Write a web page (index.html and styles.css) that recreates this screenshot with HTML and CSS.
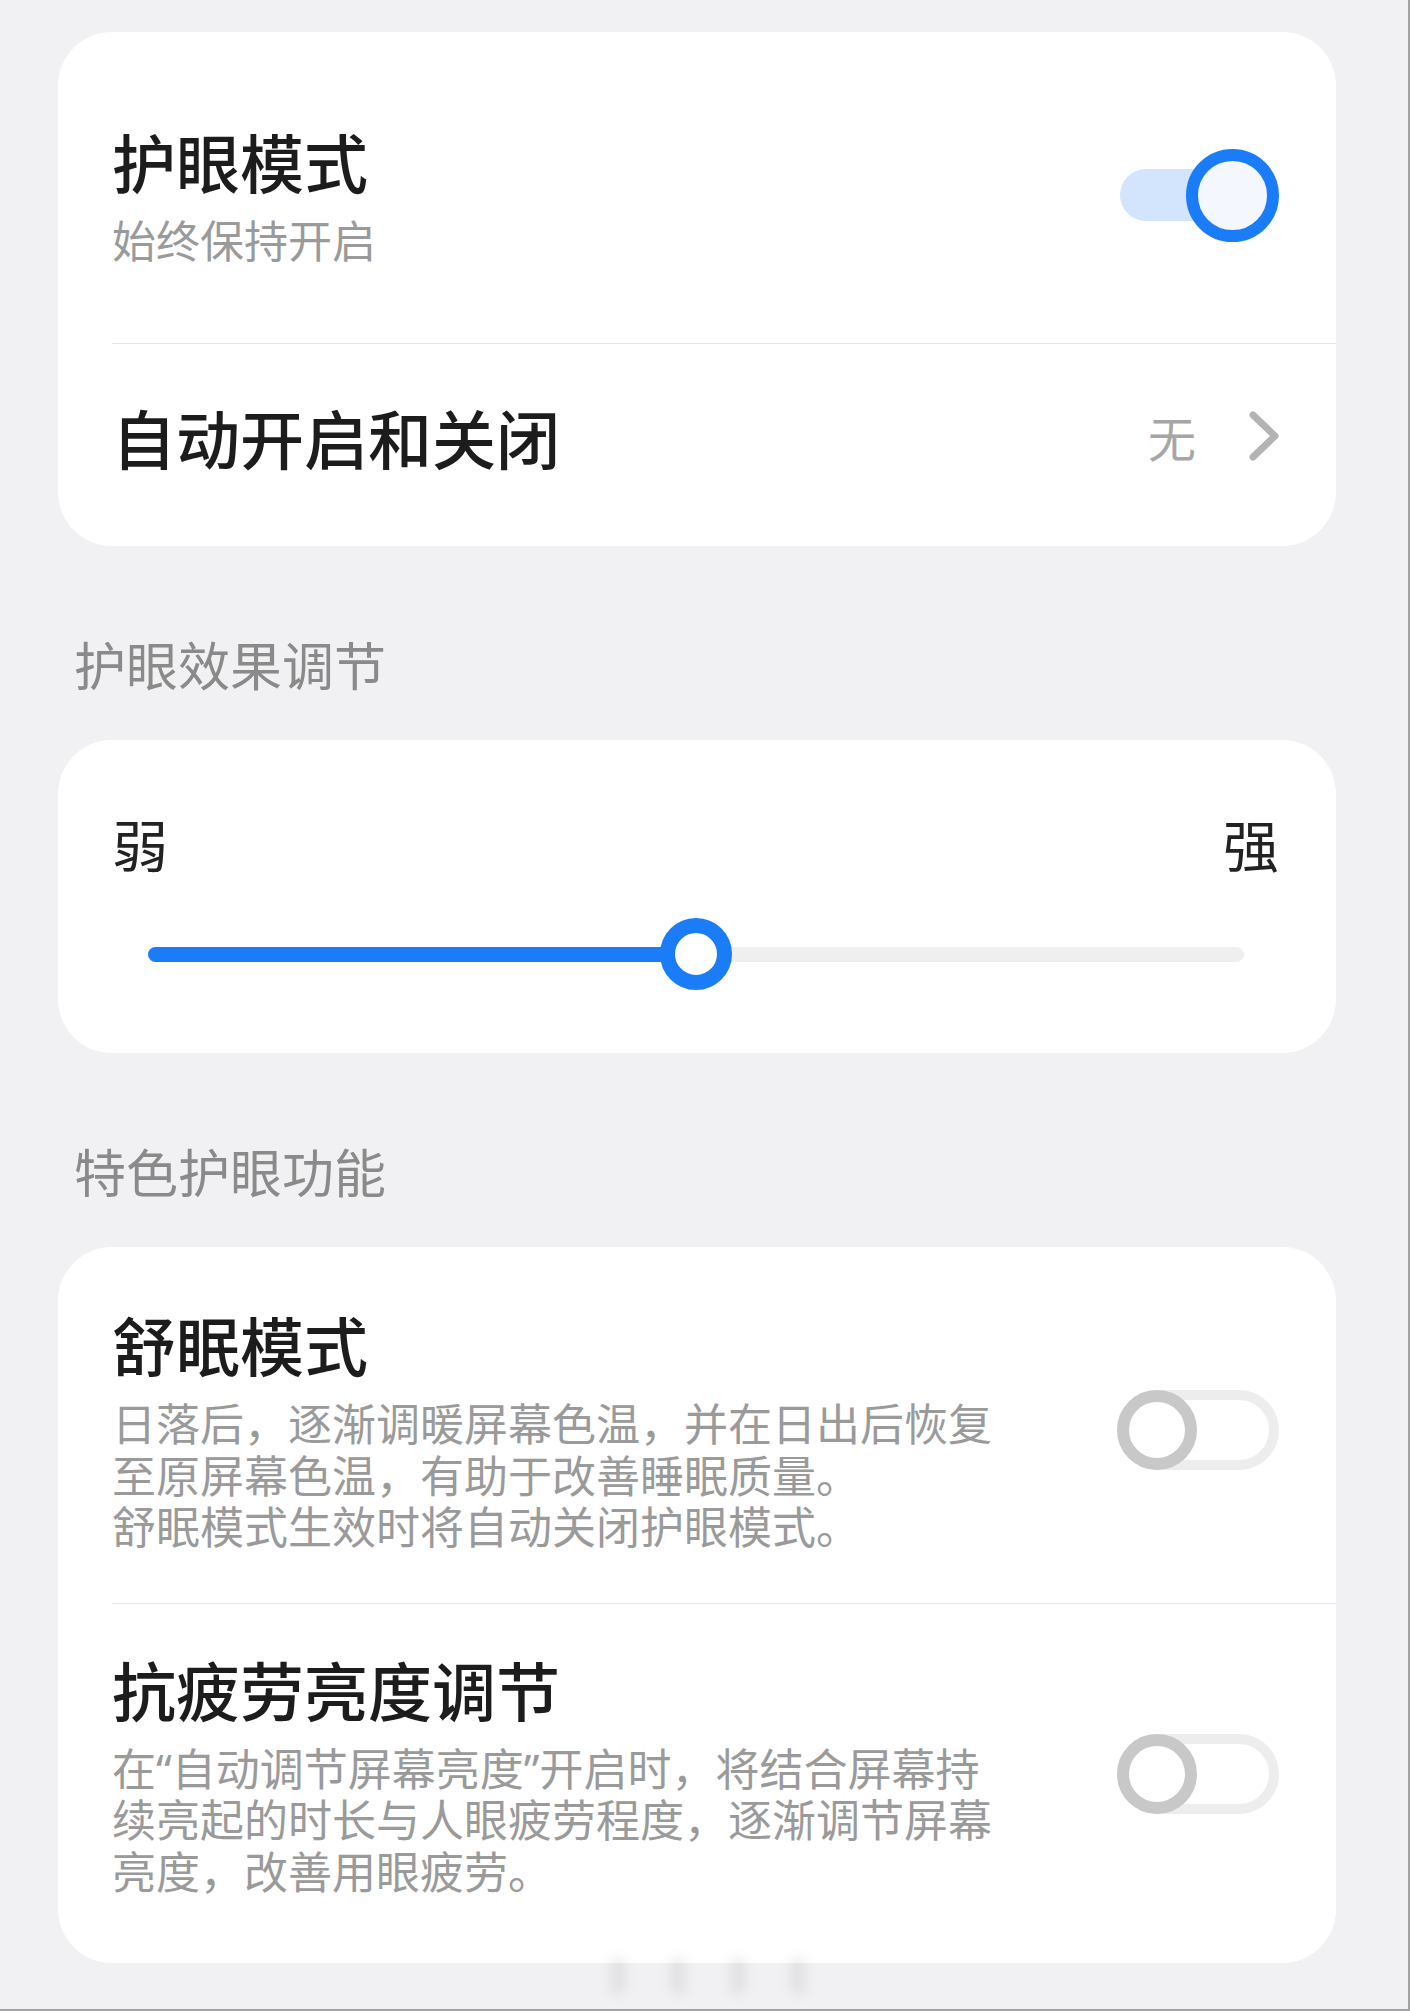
FILE: index.html
```html
<!DOCTYPE html>
<html lang="zh-CN">
<head>
  <meta charset="UTF-8" />
  <meta name="viewport" content="width=device-width, initial-scale=1.0"/>
  <title>护眼模式</title>
  <link rel="stylesheet" href="styles.css">
</head>
<body>
  <div class="page">
    <section class="card">
      <div class="row main">
        <div class="text">
          <div class="title">护眼模式</div>
          <div class="sub">始终保持开启</div>
        </div>
        <div class="switch on"><span class="knob"></span></div>
      </div>
      <div class="row link">
        <div class="title">自动开启和关闭</div>
        <div class="value">
          <span>无</span>
          <svg width="30" height="50" viewBox="0 0 30 50"><polyline points="4,4 26,25 4,46" fill="none" stroke="#b3b3b3" stroke-width="7" stroke-linecap="round" stroke-linejoin="round"/></svg>
        </div>
      </div>
    </section>

    <h2 class="group">护眼效果调节</h2>
    <section class="card slider-card">
      <div class="ends"><span>弱</span><span>强</span></div>
      <div class="slider">
        <div class="fill" style="width: 50%"></div>
        <span class="thumb" style="left: 50%"></span>
      </div>
    </section>

    <h2 class="group">特色护眼功能</h2>
    <section class="card">
      <div class="row feature">
        <div class="text">
          <div class="title">舒眠模式</div>
          <div class="desc">日落后，逐渐调暖屏幕色温，并在日出后恢复至原屏幕色温，有助于改善睡眠质量。
舒眠模式生效时将自动关闭护眼模式。</div>
        </div>
        <div class="switch"><span class="knob"></span></div>
      </div>
      <div class="row feature">
        <div class="text">
          <div class="title">抗疲劳亮度调节</div>
          <div class="desc">在“自动调节屏幕亮度”开启时，将结合屏幕持续亮起的时长与人眼疲劳程度，逐渐调节屏幕亮度，改善用眼疲劳。</div>
        </div>
        <div class="switch"><span class="knob"></span></div>
      </div>
    </section>

    <div class="watermark"><i></i><i></i><i></i><i></i></div>
  </div>
</body>
</html>
```

FILE: styles.css
```css
:root {
  --bg: #f1f1f3;
  --panel: #fff;
  --text: #1c1c1c;
  --muted: #9a9a9a;
  --accent: #1a7cf6;
  --line: #e8e8e8;
}
body {
  margin: 0;
  background: var(--bg);
  color: var(--text);
  font-family: "Noto Sans CJK SC", "Noto Sans", sans-serif;
}
.page {
  position: relative;
  min-height: 100vh;
  box-sizing: border-box;
  padding: 32px 72px 0 58px;
  border-right: 2px solid #a3a3a3;
  border-bottom: 2px solid #a3a3a3;
}
.card {
  background: var(--panel);
  border-radius: 54px;
  padding-left: 54px;
}
.row {
  display: flex;
  align-items: center;
  justify-content: space-between;
  padding-right: 57px;
  border-bottom: 1px solid var(--line);
}
.row:last-child {
  border-bottom: none;
}
.title {
  font-size: 64px;
  line-height: 70px;
  font-weight: 500;
}
.sub {
  margin-top: 18px;
  font-size: 44px;
  line-height: 52px;
  color: var(--muted);
}
.row.main {
  padding-top: 93px;
  padding-bottom: 78px;
}
.row.link {
  padding-top: 57px;
  padding-bottom: 75px;
}
.value {
  display: flex;
  align-items: center;
  gap: 53px;
  font-size: 48px;
  line-height: 56px;
  color: #a6a6a6;
}
.value svg {
  display: block;
}

/* switches */
.switch {
  position: relative;
  flex: none;
  width: 162px;
  height: 80px;
}
.switch::before {
  content: "";
  position: absolute;
  inset: 0;
  box-sizing: border-box;
  border: 10px solid #ededed;
  border-radius: 40px;
}
.switch .knob {
  position: absolute;
  left: 0;
  top: 0;
  width: 80px;
  height: 80px;
  box-sizing: border-box;
  border: 12px solid #c8c8c8;
  border-radius: 50%;
  background: #fff;
}
.switch.on {
  width: 159px;
  height: 93px;
}
.switch.on::before {
  inset: auto;
  left: 0;
  top: 20px;
  width: 120px;
  height: 52px;
  border: none;
  border-radius: 26px;
  background: #d2e5fc;
}
.switch.on .knob {
  left: auto;
  right: 0;
  width: 93px;
  height: 93px;
  border-color: var(--accent);
  background: #f4f8fe;
}

/* section headers */
.group {
  margin: 88px 0 46px 16px;
  font-size: 52px;
  line-height: 60px;
  font-weight: 400;
  color: #8a8a8a;
}

/* slider */
.slider-card {
  padding: 71px 57px 62px 54px;
}
.ends {
  display: flex;
  justify-content: space-between;
  font-size: 56px;
  line-height: 64px;
  color: #222;
}
.slider {
  position: relative;
  height: 74px;
  margin: 42px 35px 0 36px;
}
.slider::before {
  content: "";
  position: absolute;
  left: 0;
  right: 0;
  top: 30px;
  height: 15px;
  border-radius: 8px;
  background: #efefef;
}
.slider .fill {
  position: absolute;
  left: 0;
  top: 30px;
  height: 15px;
  border-radius: 8px;
  background: var(--accent);
}
.slider .thumb {
  position: absolute;
  top: 1px;
  width: 72px;
  height: 72px;
  box-sizing: border-box;
  transform: translateX(-50%);
  border: 15px solid var(--accent);
  border-radius: 50%;
  background: #fff;
}

/* feature rows */
.row.feature {
  padding-top: 61px;
  padding-bottom: 51px;
}
.row.feature:last-child {
  padding-top: 49px;
  padding-bottom: 67px;
}
/* latin font first so the curly quotes stay narrow */
.desc {
  width: 890px;
  margin-top: 21px;
  margin-bottom: -2px;
  font-family: "Noto Sans", "Noto Sans CJK SC", sans-serif;
  font-size: 44px;
  line-height: 51.5px;
  color: var(--muted);
  white-space: pre-line;
}

/* faint watermark smudge at the bottom */
.watermark {
  position: absolute;
  left: 610px;
  top: 1958px;
  display: flex;
  gap: 44px;
  filter: blur(6px);
  opacity: 0.12;
}
.watermark i {
  display: block;
  width: 16px;
  height: 36px;
  background: #777;
}
```
